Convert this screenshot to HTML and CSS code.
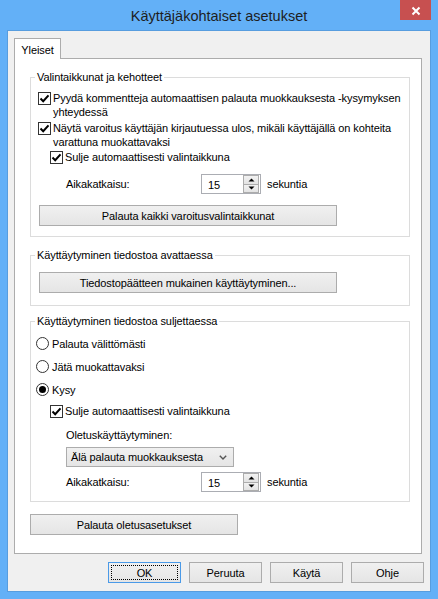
FILE: index.html
```html
<!DOCTYPE html>
<html lang="fi">
<head>
<meta charset="utf-8">
<title>Käyttäjäkohtaiset asetukset</title>
<link rel="stylesheet" href="styles.css">
</head>
<body>
<div class="titlebar">
  <div class="title">Käyttäjäkohtaiset asetukset</div>
  <div class="close"><svg width="31" height="20" viewBox="0 0 31 20"><path d="M12.5 7.5 L19.5 14.5 M19.5 7.5 L12.5 14.5" stroke="#fff" stroke-width="2" fill="none"/></svg></div>
</div>
<div class="client">
  <div class="tabs"><div class="tab">Yleiset</div></div>
  <div class="panel">
    <fieldset class="group g1">
      <legend>Valintaikkunat ja kehotteet</legend>
      <div class="check c1"><span class="box"><svg width="11" height="11" viewBox="0 0 11 11"><path d="M1.5 5.5 L4.2 8.2 L9.5 2.3" stroke="#000" stroke-width="2" fill="none"/></svg></span><span class="lbl">Pyydä kommentteja automaattisen palauta muokkauksesta -kysymyksen<br>yhteydessä</span></div>
      <div class="check c2"><span class="box"><svg width="11" height="11" viewBox="0 0 11 11"><path d="M1.5 5.5 L4.2 8.2 L9.5 2.3" stroke="#000" stroke-width="2" fill="none"/></svg></span><span class="lbl">Näytä varoitus käyttäjän kirjautuessa ulos, mikäli käyttäjällä on kohteita<br>varattuna muokattavaksi</span></div>
      <div class="check c3"><span class="box"><svg width="11" height="11" viewBox="0 0 11 11"><path d="M1.5 5.5 L4.2 8.2 L9.5 2.3" stroke="#000" stroke-width="2" fill="none"/></svg></span><span class="lbl">Sulje automaattisesti valintaikkuna</span></div>
      <div class="spinrow s1">
        <span class="spinlabel">Aikakatkaisu:</span>
        <div class="spin"><span class="val">15</span><div class="arrows"><div class="arr"><svg width="7" height="4" viewBox="0 0 7 4"><path d="M0.5 3.5 L3.5 0.5 L6.5 3.5Z" fill="#000"/></svg></div><div class="arr"><svg width="7" height="4" viewBox="0 0 7 4"><path d="M0.5 0.5 L3.5 3.5 L6.5 0.5Z" fill="#000"/></svg></div></div></div>
        <span class="unit">sekuntia</span>
      </div>
      <button class="btn wide b1">Palauta kaikki varoitusvalintaikkunat</button>
    </fieldset>

    <fieldset class="group g2">
      <legend>Käyttäytyminen tiedostoa avattaessa</legend>
      <button class="btn wide b2">Tiedostopäätteen mukainen käyttäytyminen...</button>
    </fieldset>

    <fieldset class="group g3">
      <legend>Käyttäytyminen tiedostoa suljettaessa</legend>
      <div class="radio r1"><span class="circle"></span><span class="lbl">Palauta välittömästi</span></div>
      <div class="radio r2"><span class="circle"></span><span class="lbl">Jätä muokattavaksi</span></div>
      <div class="radio r3"><span class="circle on"></span><span class="lbl">Kysy</span></div>
      <div class="check c4"><span class="box"><svg width="11" height="11" viewBox="0 0 11 11"><path d="M1.5 5.5 L4.2 8.2 L9.5 2.3" stroke="#000" stroke-width="2" fill="none"/></svg></span><span class="lbl">Sulje automaattisesti valintaikkuna</span></div>
      <div class="plain">Oletuskäyttäytyminen:</div>
      <div class="combo"><span>Älä palauta muokkauksesta</span><svg width="8" height="5" viewBox="0 0 8 5"><path d="M0.8 0.8 L4 4 L7.2 0.8" stroke="#555" stroke-width="1.4" fill="none"/></svg></div>
      <div class="spinrow s2">
        <span class="spinlabel">Aikakatkaisu:</span>
        <div class="spin"><span class="val">15</span><div class="arrows"><div class="arr"><svg width="7" height="4" viewBox="0 0 7 4"><path d="M0.5 3.5 L3.5 0.5 L6.5 3.5Z" fill="#000"/></svg></div><div class="arr"><svg width="7" height="4" viewBox="0 0 7 4"><path d="M0.5 0.5 L3.5 3.5 L6.5 0.5Z" fill="#000"/></svg></div></div></div>
        <span class="unit">sekuntia</span>
      </div>
    </fieldset>

    <button class="btn reset">Palauta oletusasetukset</button>
  </div>
  <div class="buttons">
    <button class="btn dlg default"><span class="focus">OK</span></button>
    <button class="btn dlg">Peruuta</button>
    <button class="btn dlg">Käytä</button>
    <button class="btn dlg">Ohje</button>
  </div>
</div>
</body>
</html>
```
FILE: styles.css
```css
* { box-sizing: border-box; }
html, body { margin: 0; padding: 0; }
body {
  width: 438px;
  height: 599px;
  overflow: hidden;
  background: #63b0f7;
  font-family: "Liberation Sans", Arial, sans-serif;
  font-size: 11px;
  letter-spacing: -0.1px;
  color: #000;
}
.titlebar {
  display: grid;
  grid-template-columns: 1fr auto 1fr;
  height: 30px;
}
.title {
  grid-column: 2;
  font-size: 14.5px;
  letter-spacing: 0;
  line-height: 30px;
  padding-top: 1px;
  color: #1e1e1e;
  white-space: nowrap;
}
.close {
  grid-column: 3;
  justify-self: end;
  width: 31px;
  height: 20px;
  margin-right: 7px;
  background: #c75050;
}
.close svg { display: block; }
.client {
  margin: 0 7px;
  height: 562px;
  border: 1px solid #579ddf;
  background: #f0f0f0;
  padding: 7px 7px 0 6px;
  display: flex;
  flex-direction: column;
}
.tabs {
  display: flex;
  height: 21px;
  margin-bottom: -1px;
  position: relative;
  z-index: 1;
}
.tab {
  width: 47px;
  height: 21px;
  border: 1px solid #acacac;
  border-bottom: none;
  background: #fff;
  text-align: center;
  line-height: 19px;
  padding-top: 2px;
}
.panel {
  height: 496px;
  width: 408px;
  border: 1px solid #acacac;
  background: #fff;
  padding: 11px 11px 0 15px;
  display: flex;
  flex-direction: column;
  align-items: flex-start;
}
.group {
  margin: 0;
  padding: 0;
  border: 1px solid #dcdcdc;
  min-width: 0;
  width: 380px;
  display: flex;
  flex-direction: column;
  align-items: flex-start;
}
.group legend {
  padding: 0 2px;
  margin-left: 4px;
  line-height: 15px;
}
.g1 { padding-bottom: 10px; }
.g2 { margin-top: 11px; padding-bottom: 12px; }
.g3 { margin-top: 8px; padding-bottom: 9px; }

.check {
  display: flex;
  align-items: flex-start;
  line-height: 14px;
  white-space: nowrap;
}
.box {
  width: 13px;
  height: 13px;
  border: 1px solid #333;
  background: #fff;
  margin-top: 1px;
  margin-right: 2px;
  flex: none;
}
.box svg { display: block; }
.c1 { margin-top: 6px; margin-left: 7px; }
.c2 { margin-top: 2px; margin-left: 7px; }
.c3 { margin-top: 1px; margin-left: 19px; }
.c4 { margin-top: 7px; margin-left: 19px; height: 15px; }

.spinrow {
  display: flex;
  align-items: center;
  height: 20px;
}
.s1 { margin-top: 10px; }
.s2 { margin-top: 5px; }
.spinlabel {
  width: 135px;
  margin-left: 35px;
}
.spin {
  width: 60px;
  height: 20px;
  border: 1px solid #abadb3;
  background: #fff;
  display: flex;
  align-items: center;
  justify-content: space-between;
}
.val { padding-left: 6px; padding-top: 1px; }
.arrows {
  width: 16px;
  height: 18px;
  display: flex;
  flex-direction: column;
  margin-right: 1px;
}
.arr {
  flex: 1;
  border: 1px solid #acacac;
  background: linear-gradient(#f2f2f2, #e3e3e3);
  display: flex;
  align-items: center;
  justify-content: center;
}
.arr + .arr { border-top: none; }
.arr svg { display: block; }
.unit { margin-left: 6px; }

.btn {
  height: 21px;
  border: 1px solid #acacac;
  background: linear-gradient(#f0f0f0, #e5e5e5);
  font-family: inherit;
  font-size: 11px;
  letter-spacing: -0.1px;
  color: #000;
  padding: 0;
  margin: 0;
  display: flex;
  align-items: center;
  justify-content: center;
  white-space: nowrap;
}
.wide { width: 298px; margin-left: 8px; }
.b1 { margin-top: 11px; }
.b2 { margin-top: 9px; }
.reset { width: 208px; margin-top: 12px; }

.radio {
  display: flex;
  align-items: center;
  height: 15px;
  margin-left: 5px;
}
.r1 { margin-top: 7px; }
.r2, .r3 { margin-top: 8px; }
.circle {
  width: 13px;
  height: 13px;
  border: 1px solid #333;
  border-radius: 50%;
  background: #fff;
  margin-right: 3px;
  display: flex;
  align-items: center;
  justify-content: center;
  flex: none;
}
.circle.on::before {
  content: "";
  width: 7px;
  height: 7px;
  border-radius: 50%;
  background: #000;
}
.plain {
  margin-top: 9px;
  margin-left: 35px;
  line-height: 15px;
}
.combo {
  margin-top: 4px;
  margin-left: 35px;
  width: 168px;
  height: 20px;
  border: 1px solid #acacac;
  background: linear-gradient(#f0f0f0, #e5e5e5);
  display: flex;
  align-items: center;
  justify-content: space-between;
  padding: 0 6px 0 4px;
}
.combo svg { display: block; }

.buttons {
  display: flex;
  justify-content: flex-end;
  gap: 8px;
  margin-top: 8px;
  margin-right: -1px;
}
.dlg { width: 73px; }
.default { border-color: #4a9ae8; padding: 2px; }
.focus {
  flex: 1;
  align-self: stretch;
  border: 1px dotted #000;
  display: flex;
  align-items: center;
  justify-content: center;
}
```
